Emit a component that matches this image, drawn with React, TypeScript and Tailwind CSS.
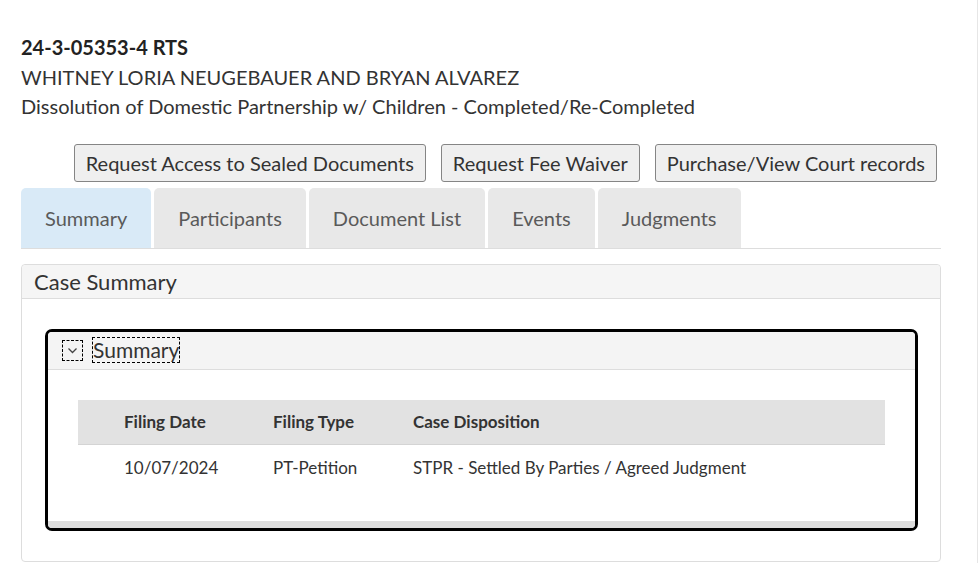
import React, { useState } from 'react';

const tabs = ['Summary', 'Participants', 'Document List', 'Events', 'Judgments'];
const actions = ['Request Access to Sealed Documents', 'Request Fee Waiver', 'Purchase/View Court records'];

export default function App() {
  const [activeTab, setActiveTab] = useState('Summary');
  const [open, setOpen] = useState(true);

  return (
    <div className="min-h-[563px] w-[978px] bg-white border-r border-[#e6e6e6] font-['Lato','Open_Sans',sans-serif] text-[#333]">
      <div className="w-[920px] ml-[21px] pt-[33px]">
        <div className="text-[20px] leading-[29.5px]">
          <div className="font-bold text-[#222]">24-3-05353-4 RTS</div>
          <div>WHITNEY LORIA NEUGEBAUER AND BRYAN ALVAREZ</div>
          <div>Dissolution of Domestic Partnership w/ Children - Completed/Re-Completed</div>
        </div>

        <div className="mt-[22px] flex justify-end gap-[15px] pr-[4px]">
          {actions.map((a) => (
            <button
              key={a}
              className="h-[38px] px-[11px] bg-[#efefef] border border-[#858585] rounded-[3px] text-[20px] text-[#333] leading-none"
            >
              {a}
            </button>
          ))}
        </div>

        <div className="mt-[6px] flex gap-[3px] border-b border-[#dddddd]">
          {tabs.map((t) => (
            <button
              key={t}
              onClick={() => setActiveTab(t)}
              className={`h-[60px] px-[24px] rounded-t-[5px] text-[20px] text-[#5a5a5a] ${
                activeTab === t ? 'bg-[#d9eaf7]' : 'bg-[#e8e8e8]'
              }`}
            >
              {t}
            </button>
          ))}
        </div>

        <div className="mt-[15px] border border-[#dddddd] rounded-[4px]">
          <div className="h-[34px] bg-[#f5f5f5] border-b border-[#dddddd] rounded-t-[4px] px-[12px] flex items-center text-[22px] text-[#333]">
            Case Summary
          </div>
          <div className="pt-[30px] pb-[30px] pl-[23px] pr-[22px]">
            <div className="border-[3px] border-black rounded-[7px] overflow-hidden">
              <div className="h-[38px] bg-[#f4f4f4] border-b border-[#dddddd] flex items-center pl-[14px] gap-[9px]">
                <button
                  onClick={() => setOpen(!open)}
                  className="w-[21px] h-[21px] border border-dashed border-black flex items-center justify-center"
                >
                  <svg width="11" height="7" viewBox="0 0 11 7" fill="none">
                    <path d="M1.5 1.5 L5.5 5.5 L9.5 1.5" stroke="#444" strokeWidth="1.3" />
                  </svg>
                </button>
                <span className="border border-dashed border-black leading-[24px] text-[21px] text-[#333]">Summary</span>
              </div>
              {open && (
                <div className="pt-[30px] px-[30px] pb-[30px] bg-white">
                  <div className="grid grid-cols-[149px_140px_1fr] bg-[#e2e2e2] h-[45px] items-center text-[17px] font-bold text-[#333] pl-[46px] border-b border-[#d4d4d4]">
                    <span>Filing Date</span>
                    <span>Filing Type</span>
                    <span>Case Disposition</span>
                  </div>
                  <div className="grid grid-cols-[149px_140px_1fr] h-[46px] items-center text-[17px] text-[#333] pl-[46px]">
                    <span>10/07/2024</span>
                    <span>PT-Petition</span>
                    <span>STPR - Settled By Parties / Agreed Judgment</span>
                  </div>
                </div>
              )}
              <div className="h-[7px] bg-[#dddddd]" />
            </div>
          </div>
        </div>
      </div>
    </div>
  );
}
